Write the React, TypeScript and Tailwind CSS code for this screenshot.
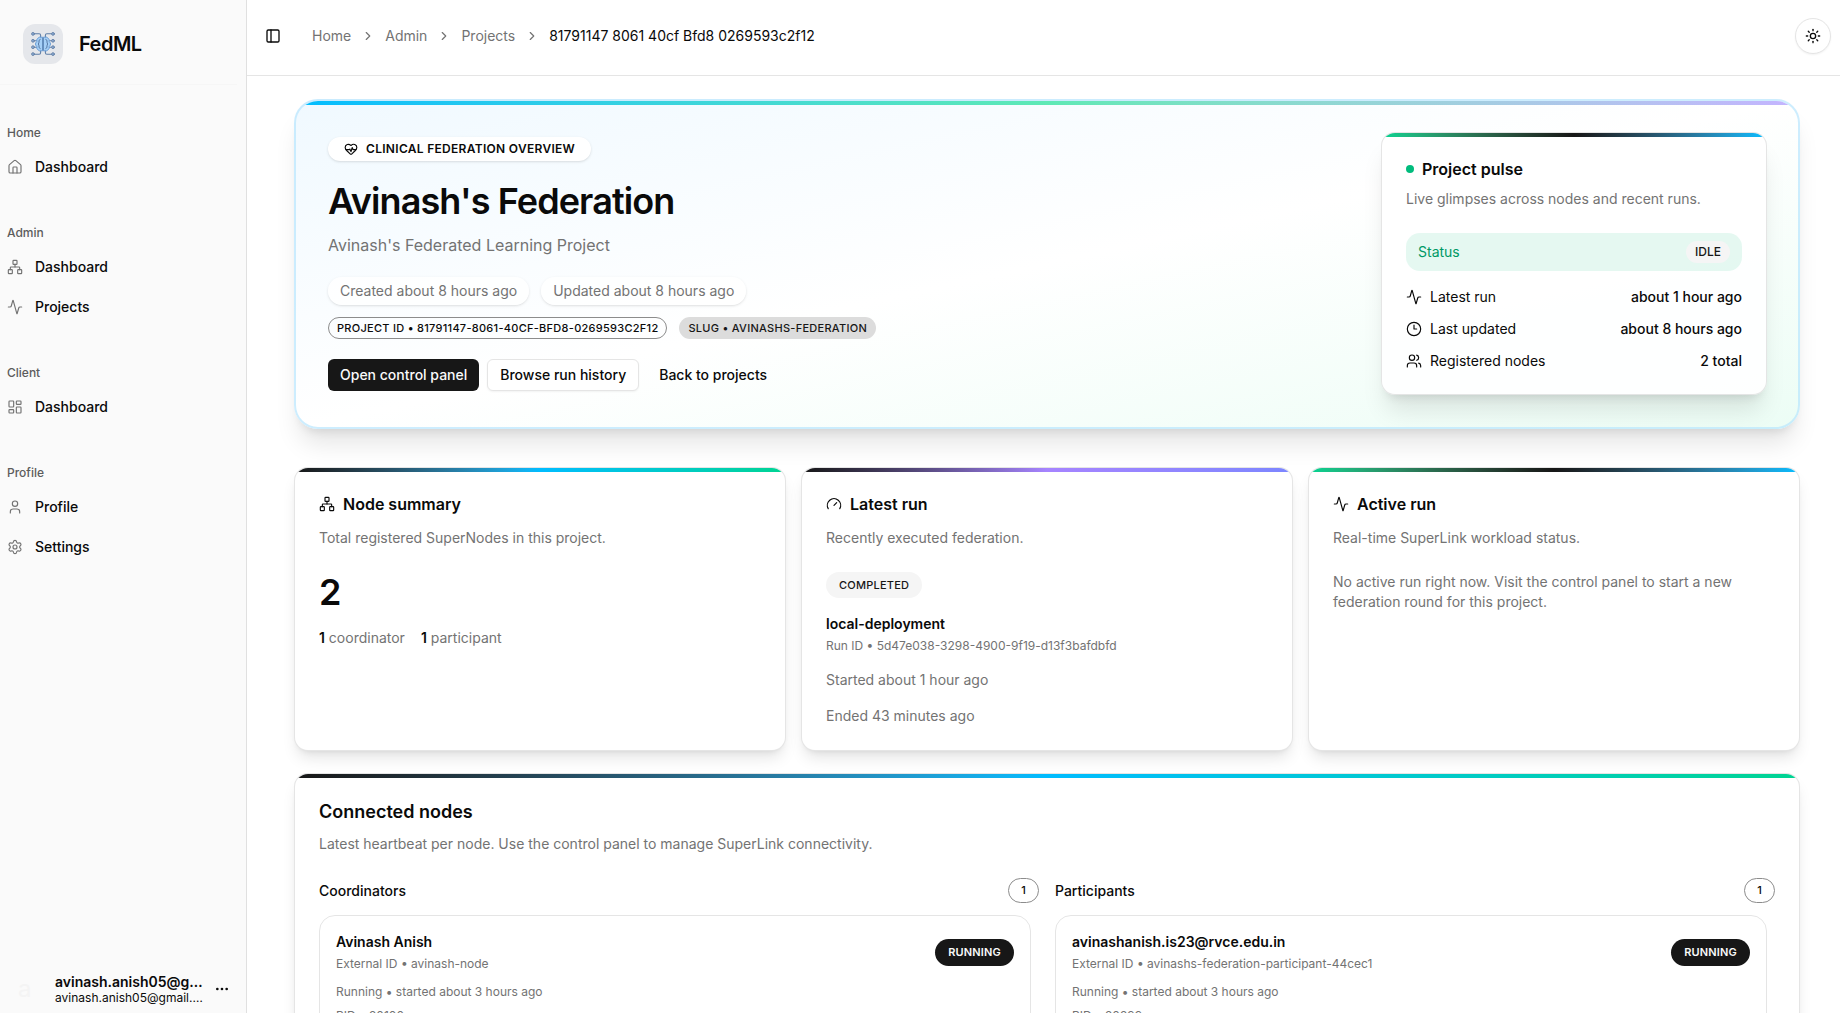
import React from "react";
import {
  Activity,
  ChevronRight,
  Clock3,
  Ellipsis,
  Gauge,
  HeartPulse,
  House,
  LayoutDashboard,
  Network,
  PanelLeft,
  Settings,
  Sun,
  User,
  Users,
  type LucideIcon,
} from "lucide-react";

type NavItem = { label: string; icon: LucideIcon };
type NavGroup = { title: string; items: NavItem[] };

const NAV: NavGroup[] = [
  { title: "Home", items: [{ label: "Dashboard", icon: House }] },
  {
    title: "Admin",
    items: [
      { label: "Dashboard", icon: Network },
      { label: "Projects", icon: Activity },
    ],
  },
  { title: "Client", items: [{ label: "Dashboard", icon: LayoutDashboard }] },
  {
    title: "Profile",
    items: [
      { label: "Profile", icon: User },
      { label: "Settings", icon: Settings },
    ],
  },
];

function BrandMark() {
  return (
    <svg viewBox="0 0 24 24" className="size-6" fill="none" strokeLinecap="round" strokeLinejoin="round">
      <g stroke="#5f7fa8" strokeWidth="1.1">
        <path d="M2.5 1.8H8.2Q9.6 1.8 9.6 3.2V6M21.5 1.8H15.8Q14.4 1.8 14.4 3.2V6" />
        <path d="M2.5 22.2H8.2Q9.6 22.2 9.6 20.8V18M21.5 22.2H15.8Q14.4 22.2 14.4 20.8V18" />
        <path d="M2.5 8.8H6M21.5 8.8H18M2.5 15.2H6M21.5 15.2H18" />
      </g>
      <path
        d="M11.3 5.2H8.2L5.8 7.4V9.6L4.6 11V13L5.8 14.4V16.6L8.2 18.8H11.3ZM12.7 5.2H15.8L18.2 7.4V9.6L19.4 11V13L18.2 14.4V16.6L15.8 18.8H12.7Z"
        fill="#a6d0f7"
        stroke="#6b9ed6"
        strokeWidth="1"
      />
      <path d="M9.2 7.4Q7.2 8 8 10.2Q6.8 12 8 13.8Q7.4 16 9.2 16.6M14.8 7.4Q16.8 8 16 10.2Q17.2 12 16 13.8Q16.6 16 14.8 16.6M12 6V18" stroke="#4d6f9c" strokeWidth="0.9" />
      <g fill="#8fb0d8" stroke="#6480a6" strokeWidth="0.9">
        <circle cx="2" cy="1.9" r="1.4" />
        <circle cx="22" cy="1.9" r="1.4" />
        <circle cx="2" cy="8.8" r="1.4" />
        <circle cx="22" cy="8.8" r="1.4" />
        <circle cx="2" cy="15.2" r="1.4" />
        <circle cx="22" cy="15.2" r="1.4" />
        <circle cx="2" cy="22.1" r="1.4" />
        <circle cx="22" cy="22.1" r="1.4" />
      </g>
    </svg>
  );
}

function Sidebar() {
  return (
    <aside className="flex w-[247px] shrink-0 flex-col border-r border-[#e0e0e0] bg-[#fafafa]">
      <div className="mr-[9px] flex h-[85px] items-center gap-4 border-b border-[#f6f6f6] pl-[23px] pt-1">
        <div className="flex size-10 items-center justify-center rounded-xl bg-[#e5e7eb]">
          <BrandMark />
        </div>
        <span className="text-xl font-semibold tracking-tight">FedML</span>
      </div>
      <nav className="mt-8 flex flex-1 flex-col gap-[30px]">
        {NAV.map((group) => (
          <div key={group.title}>
            <div className="-mb-0.5 flex h-8 items-center pl-[7px] text-xs font-medium text-[#5c5c5c]">{group.title}</div>
            <ul className="flex flex-col">
              {group.items.map(({ label, icon: Icon }) => (
                <li key={label} className="flex h-10 items-center gap-3 pl-[7px] text-sm font-medium">
                  <Icon className="size-4 text-[#737373]" strokeWidth={1.75} />
                  <span>{label}</span>
                </li>
              ))}
            </ul>
          </div>
        ))}
      </nav>
      <div className="flex h-12 items-center">
        <div className="w-[55px] pl-[18px] text-2xl text-[#f4f4f4]">a</div>
        <div className="w-[148px]">
          <div className="truncate text-sm font-semibold leading-[17px]">avinash.anish05@gmail.com</div>
          <div className="truncate text-xs leading-4">avinash.anish05@gmail.com</div>
        </div>
        <Ellipsis className="ml-[11px] size-4" />
      </div>
    </aside>
  );
}

function TopBar() {
  return (
    <header className="flex h-[76px] shrink-0 items-start justify-between border-b border-[#e5e5e5] pl-[18px] pr-[9px] pt-[18px]">
      <div className="flex h-9 items-center">
        <PanelLeft className="size-4" />
        <ol className="ml-[31px] flex items-center gap-2.5 text-sm text-[#737373]">
          <li>Home</li>
          <ChevronRight className="size-3.5" />
          <li>Admin</li>
          <ChevronRight className="size-3.5" />
          <li>Projects</li>
          <ChevronRight className="size-3.5" />
          <li className="text-[#0a0a0a]">81791147 8061 40cf Bfd8 0269593c2f12</li>
        </ol>
      </div>
      <button className="flex size-9 items-center justify-center rounded-full border border-[#e5e5e5] bg-white shadow-xs">
        <Sun className="size-4" />
      </button>
    </header>
  );
}

function PulseRow({ icon: Icon, label, value }: { icon: LucideIcon; label: string; value: string }) {
  return (
    <div className="flex h-5 items-center justify-between text-sm">
      <span className="flex items-center gap-2">
        <Icon className="size-4" strokeWidth={1.75} />
        {label}
      </span>
      <span className="font-medium">{value}</span>
    </div>
  );
}

function ProjectPulse() {
  return (
    <div className="h-[263px] w-[386px] overflow-hidden rounded-[14px] border border-black/10 bg-white/90 shadow-xl">
      <div className="h-1 bg-linear-to-r from-[#00d492] via-[#171717] to-[#00bcff]" />
      <div className="px-6 pt-5">
        <div className="flex h-6 items-center gap-2 font-semibold">
          <span className="size-2 rounded-full bg-[#00bc7d]" />
          Project pulse
        </div>
        <p className="mt-2 text-sm text-[#737373]">Live glimpses across nodes and recent runs.</p>
        <div className="mt-6 flex h-[38px] items-center justify-between rounded-[14px] bg-[#00bc7d]/10 px-3">
          <span className="text-sm text-[#009966]">Status</span>
          <span className="flex h-[22px] items-center rounded-full bg-[#f5f5f5] px-[9px] text-xs font-medium text-[#171717]">
            IDLE
          </span>
        </div>
        <div className="mt-4 flex flex-col gap-3">
          <PulseRow icon={Activity} label="Latest run" value="about 1 hour ago" />
          <PulseRow icon={Clock3} label="Last updated" value="about 8 hours ago" />
          <PulseRow icon={Users} label="Registered nodes" value="2 total" />
        </div>
      </div>
    </div>
  );
}

function Hero() {
  return (
    <section className="h-[330px] overflow-hidden rounded-3xl border-2 border-[#b8e6fe]/70 bg-linear-to-br from-[#f0f9ff] via-white to-[#ecfdf5] bg-origin-border shadow-xl">
      <div className="h-1 bg-linear-to-r from-[#00bcff] via-[#5ee9b5] to-[#c4b4ff]" />
      <div className="flex justify-between pl-8 pr-[31px] pt-[27px]">
        <div className="flex flex-col items-start pt-[5px]">
          <div className="flex h-6 items-center gap-2 rounded-full bg-white px-4 text-xs font-semibold tracking-wide shadow-sm">
            <HeartPulse className="size-3.5" />
            CLINICAL FEDERATION OVERVIEW
          </div>
          <h1 className="mt-5 text-4xl font-semibold leading-10 tracking-tight">Avinash&apos;s Federation</h1>
          <p className="mt-3 leading-6 text-[#737373]">Avinash&apos;s Federated Learning Project</p>
          <div className="mt-5 flex gap-3 text-sm text-[#737373]">
            <span className="flex h-7 items-center rounded-full bg-white/80 px-3 shadow-sm">Created about 8 hours ago</span>
            <span className="flex h-7 items-center rounded-full bg-white/80 px-3 shadow-sm">Updated about 8 hours ago</span>
          </div>
          <div className="mt-3 flex gap-3 text-[11px] font-medium tracking-wide">
            <span className="flex h-[22px] items-center rounded-full border border-[#8c8c8c] px-2">
              PROJECT ID • 81791147-8061-40CF-BFD8-0269593C2F12
            </span>
            <span className="flex h-[22px] items-center rounded-full bg-[#dcdcdc] px-[9px] text-[#171717]">
              SLUG • AVINASHS-FEDERATION
            </span>
          </div>
          <div className="mt-5 flex gap-2 text-sm font-medium">
            <button className="h-8 rounded-md bg-[#171717] px-3 text-[#fafafa]">Open control panel</button>
            <button className="h-8 rounded-md border border-[#e5e5e5] bg-white px-3 shadow-xs">Browse run history</button>
            <button className="h-8 px-3">Back to projects</button>
          </div>
        </div>
        <ProjectPulse />
      </div>
    </section>
  );
}

function SummaryCard({
  bar,
  icon: Icon,
  title,
  subtitle,
  children,
}: {
  bar: string;
  icon: LucideIcon;
  title: string;
  subtitle: string;
  children: React.ReactNode;
}) {
  return (
    <section className="h-[284px] overflow-hidden rounded-[14px] border border-black/10 bg-white shadow-lg">
      <div className={`h-1 ${bar}`} />
      <div className="px-6 pt-5">
        <h2 className="flex h-6 items-center gap-2 font-semibold">
          <Icon className="size-4" strokeWidth={1.75} />
          {title}
        </h2>
        <p className="mt-3 text-sm text-[#737373]">{subtitle}</p>
        {children}
      </div>
    </section>
  );
}

function NodeColumn({ title, name, externalId, pid }: { title: string; name: string; externalId: string; pid: string }) {
  return (
    <div className="w-[720px]">
      <div className="flex h-[25px] items-center justify-between">
        <h3 className="text-sm font-medium">{title}</h3>
        <span className="flex h-[25px] w-[31px] items-center justify-center rounded-full border border-[#8c8c8c] text-[11px] font-medium">
          1
        </span>
      </div>
      <div className="mr-2 mt-3 flex h-[160px] justify-between rounded-2xl border border-[#e5e5e5] px-4 pt-4">
        <div className="text-xs text-[#737373]">
          <div className="text-sm font-semibold text-[#0a0a0a]">{name}</div>
          <div className="mt-1 leading-4">External ID • {externalId}</div>
          <div className="mt-3 leading-4">Running • started about 3 hours ago</div>
          <div className="mt-2 leading-4">PID • {pid}</div>
        </div>
        <span className="mt-[7px] flex h-[27px] items-center rounded-full bg-[#171717] px-[13px] text-[11px] font-semibold tracking-[0.015em] text-[#fafafa]">
          RUNNING
        </span>
      </div>
    </div>
  );
}

export default function App() {
  return (
    <div className="flex h-[1013px] w-full overflow-hidden bg-white font-['Inter',sans-serif] text-[#0a0a0a]">
      <Sidebar />
      <div className="flex min-w-0 flex-1 flex-col">
        <TopBar />
        <main className="flex min-h-0 flex-1 flex-col overflow-hidden pl-[47px] pr-10 pt-[23px]">
          <div className="shrink-0">
            <Hero />
            <div className="mt-[38px] grid grid-cols-3 gap-[15px]">
              <SummaryCard
                bar="bg-linear-to-r from-[#171717] via-[#00bcff] to-[#00d492]"
                icon={Network}
                title="Node summary"
                subtitle="Total registered SuperNodes in this project."
              >
                <div className="mt-6 text-4xl font-semibold leading-10">2</div>
                <div className="mt-4 flex gap-4 text-sm text-[#737373]">
                  <span>
                    <b className="font-semibold text-[#0a0a0a]">1</b> coordinator
                  </span>
                  <span>
                    <b className="font-semibold text-[#0a0a0a]">1</b> participant
                  </span>
                </div>
              </SummaryCard>
              <SummaryCard
                bar="bg-linear-to-r from-[#171717] via-[#a684ff] to-[#7c86ff]"
                icon={Gauge}
                title="Latest run"
                subtitle="Recently executed federation."
              >
                <span className="mt-6 flex h-[26px] w-fit items-center rounded-full bg-[#f5f5f5] px-[13px] text-[11px] font-medium tracking-[0.02em] text-[#171717]">
                  COMPLETED
                </span>
                <div className="mt-4 text-sm font-semibold">local-deployment</div>
                <div className="mt-1 text-xs text-[#737373]">Run ID • 5d47e038-3298-4900-9f19-d13f3bafdbfd</div>
                <div className="mt-4 text-sm text-[#737373]">Started about 1 hour ago</div>
                <div className="mt-4 text-sm text-[#737373]">Ended 43 minutes ago</div>
              </SummaryCard>
              <SummaryCard
                bar="bg-linear-to-r from-[#00d492] via-[#171717] to-[#00bcff]"
                icon={Activity}
                title="Active run"
                subtitle="Real-time SuperLink workload status."
              >
                <p className="mt-6 w-[420px] text-sm text-[#737373]">
                  No active run right now. Visit the control panel to start a new federation round for this project.
                </p>
              </SummaryCard>
            </div>
            <section className="mt-[22px] h-[400px] overflow-hidden rounded-[14px] border border-black/10 bg-white shadow-lg">
              <div className="h-1 bg-linear-to-r from-[#171717] via-[#00bcff] to-[#00d492]" />
              <div className="pl-6 pt-5">
                <h2 className="text-lg font-semibold leading-7">Connected nodes</h2>
                <p className="mt-2 text-sm text-[#737373]">
                  Latest heartbeat per node. Use the control panel to manage SuperLink connectivity.
                </p>
                <div className="mt-6 flex gap-4">
                  <NodeColumn title="Coordinators" name="Avinash Anish" externalId="avinash-node" pid="20100" />
                  <NodeColumn
                    title="Participants"
                    name="avinashanish.is23@rvce.edu.in"
                    externalId="avinashs-federation-participant-44cec1"
                    pid="20299"
                  />
                </div>
              </div>
            </section>
          </div>
        </main>
      </div>
    </div>
  );
}
